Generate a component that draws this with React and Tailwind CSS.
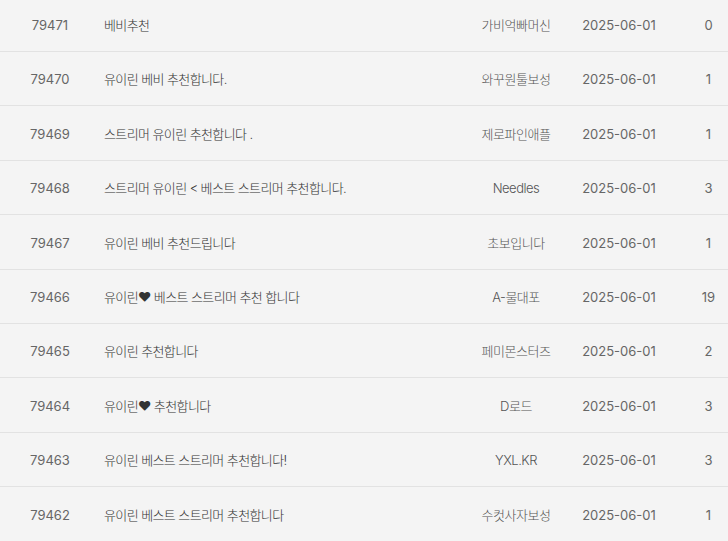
import React from "react";

const rows = [
  ["79471", "베비추천", "가비억빠머신", "0"],
  ["79470", "유이린 베비 추천합니다.", "와꾸원툴보성", "1"],
  ["79469", "스트리머 유이린 추천합니다 .", "제로파인애플", "1"],
  ["79468", "스트리머 유이린 < 베스트 스트리머 추천합니다.", "Needles", "3"],
  ["79467", "유이린 베비 추천드립니다", "초보입니다", "1"],
  ["79466", "유이린♥ 베스트 스트리머 추천 합니다", "A-물대포", "19"],
  ["79465", "유이린 추천합니다", "페미몬스터즈", "2"],
  ["79464", "유이린♥ 추천합니다", "D로드", "3"],
  ["79463", "유이린 베스트 스트리머 추천합니다!", "YXL.KR", "3"],
  ["79462", "유이린 베스트 스트리머 추천합니다", "수컷사자보성", "1"],
];

export default function App() {
  return (
    <div
      className="w-[728px] h-[541px] overflow-hidden bg-[#f4f4f4] text-[13px]"
      style={{ fontFamily: 'Inter, "Noto Sans CJK KR", sans-serif' }}
    >
      <div className="-mt-[2.4px]">
        {rows.map((r, i) => (
          <div
            key={i}
            className="flex items-center h-[54.4px] pt-[3px] border-b border-[#e2e2e2]"
          >
            <div className="w-[100px] text-center text-[#666]">{r[0]}</div>
            <div className="flex-1 pl-[4px] text-[#333] font-light tracking-[-0.6px]">{r[1]}</div>
            <div className="w-[104px] text-center text-[#555] font-light tracking-[-0.5px]">{r[2]}</div>
            <div className="w-[102px] text-center text-[#666]">2025-06-01</div>
            <div className="w-[58px] pl-[19px] text-center text-[#666]">{r[3]}</div>
          </div>
        ))}
      </div>
    </div>
  );
}
